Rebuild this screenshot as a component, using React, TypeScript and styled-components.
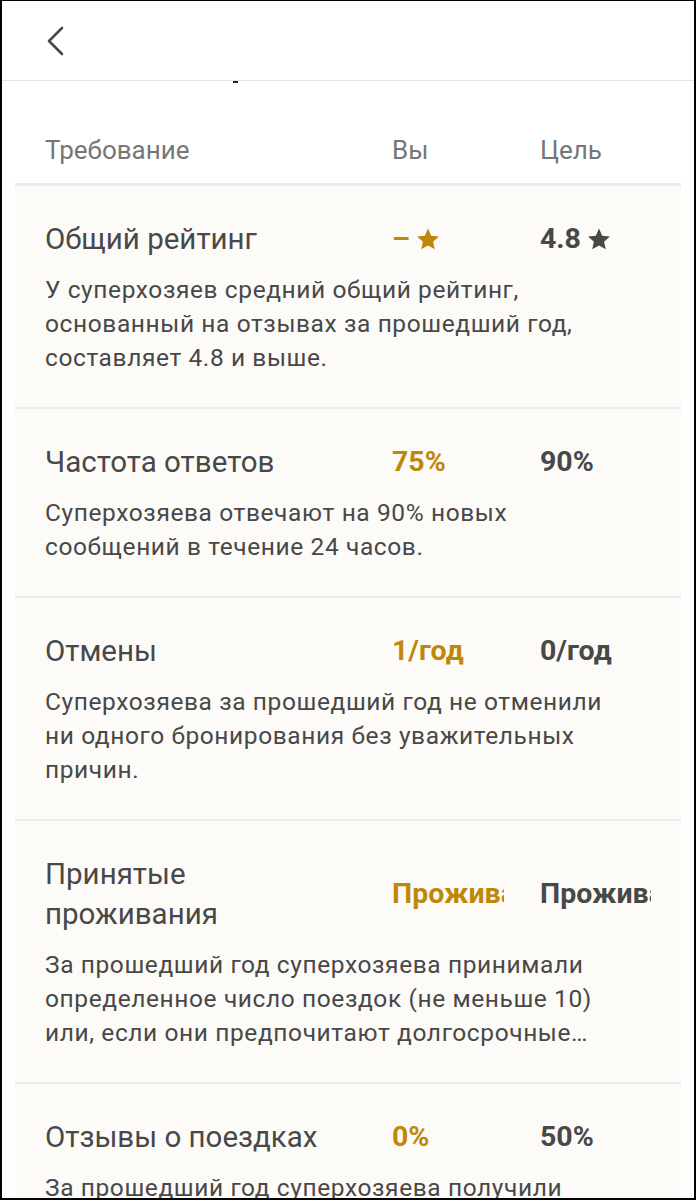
import React from "react";
import styled, {createGlobalStyle} from "styled-components";

const GlobalStyle = createGlobalStyle`
  html, body {
    margin: 0;
    padding: 0;
    background: #ffffff;
  }
  body {
    font-family: Roboto, "Noto Sans", "Liberation Sans", sans-serif;
    -webkit-font-smoothing: antialiased;
  }
`

const Screen = styled.div`
  box-sizing: border-box;
  width: 696px;
  height: 1200px;
  border: 2px solid #000;
  border-top-width: 1px;
  overflow: hidden;
  display: flex;
  flex-direction: column;
  background: #fff;
`

const TopBar = styled.header`
  flex: none;
  height: 79px;
  display: flex;
  align-items: center;
  padding-left: 40px;
  border-bottom: 1px solid #e4e4e4;
`

const BackButton = styled.button`
  border: 0;
  background: none;
  padding: 0;
  width: 28px;
  height: 32px;
  display: flex;
  align-items: center;
  justify-content: center;
  color: #484848;
  cursor: pointer;
`

const Scroller = styled.div`
  flex: 1;
  overflow: hidden;
  padding: 0 13px;
`

// bottom edge of the page title that has scrolled under the top bar
const TitleTail = styled.div`
  width: 5px;
  height: 2px;
  margin-left: 218px;
  background: #222;
`

const Grid = styled.div`
  display: grid;
  grid-template-columns: 1fr 148px 111px;
  padding: 0 30px;
`

const ColumnHead = styled(Grid)`
  padding-top: 52px;
  padding-bottom: 18px;
  border-bottom: 3px solid #ebebeb;
  font-size: 26px;
  line-height: 30px;
  color: #767676;
`

const Table = styled.div`
  background: #fdfbf8;
`

const Row = styled(Grid)<{$last?: boolean}>`
  padding-top: 33px;
  padding-bottom: 32px;
  border-bottom: ${p => (p.$last ? "0" : "2px solid #eeecea")};
  align-items: center;
`

const Title = styled.div`
  font-size: 29.5px;
  line-height: 40px;
  color: #484848;
  padding-right: 70px;
`

const Value = styled.div<{$tone: "own" | "goal"}>`
  font-size: 28.5px;
  font-weight: 700;
  line-height: 40px;
  color: ${p => (p.$tone === "own" ? "#bf870a" : "#484848")};
  white-space: nowrap;
  overflow: hidden;
  max-width: 112px;
  display: flex;
  align-items: center;
  gap: 6px;
`

const Desc = styled.div`
  grid-column: 1 / -1;
  margin-top: 14px;
  max-width: 572px;
  font-size: 24.5px;
  letter-spacing: 0.6px;
  line-height: 34px;
  color: #484848;
  display: -webkit-box;
  -webkit-line-clamp: 3;
  -webkit-box-orient: vertical;
  overflow: hidden;
`

const Star = () => (
  <svg width="24" height="24" viewBox="0 0 24 24" fill="currentColor" aria-hidden="true">
    <path d="M12 1.6l3.2 7.1 7.7.8-5.8 5.2 1.7 7.6L12 18.4l-6.8 3.9 1.7-7.6L1.1 9.5l7.7-.8z" />
  </svg>
)

type Requirement = {
  id: string;
  title: string;
  own: React.ReactNode;
  goal: React.ReactNode;
  text: string;
}

const REQUIREMENTS: Requirement[] = [
  {
    id: "rating",
    title: "Общий рейтинг",
    own: <>–<Star /></>,
    goal: <>4.8<Star /></>,
    text: "У суперхозяев средний общий рейтинг, основанный на отзывах за прошедший год, составляет 4.8 и выше.",
  },
  {
    id: "response",
    title: "Частота ответов",
    own: "75%",
    goal: "90%",
    text: "Суперхозяева отвечают на 90% новых сообщений в течение 24 часов.",
  },
  {
    id: "cancel",
    title: "Отмены",
    own: "1/год",
    goal: "0/год",
    text: "Суперхозяева за прошедший год не отменили ни одного бронирования без уважительных причин.",
  },
  {
    id: "stays",
    title: "Принятые проживания",
    own: "Проживания",
    goal: "Проживания",
    text: "За прошедший год суперхозяева принимали определенное число поездок (не меньше 10) или, если они предпочитают долгосрочные бронирования, не меньше 100 ночей в сумме.",
  },
  {
    id: "reviews",
    title: "Отзывы о поездках",
    own: "0%",
    goal: "50%",
    text: "За прошедший год суперхозяева получили отзывы не меньше чем о 50% поездок.",
  },
]

const App = () => {
  return (
    <>
      <GlobalStyle />
      <Screen>
        <TopBar>
          <BackButton aria-label="Назад">
            <svg width="20" height="30" viewBox="0 0 20 30" fill="none" stroke="currentColor" strokeWidth="2.6" strokeLinecap="round" strokeLinejoin="round">
              <path d="M16 2L3 15l13 13" />
            </svg>
          </BackButton>
        </TopBar>
        <Scroller>
          <TitleTail />
          <ColumnHead>
            <div>Требование</div>
            <div>Вы</div>
            <div>Цель</div>
          </ColumnHead>
          <Table>
            {REQUIREMENTS.map((req, i) => (
              <Row key={req.id} $last={i === REQUIREMENTS.length - 1}>
                <Title>{req.title}</Title>
                <Value $tone="own">{req.own}</Value>
                <Value $tone="goal">{req.goal}</Value>
                <Desc>{req.text}</Desc>
              </Row>
            ))}
          </Table>
        </Scroller>
      </Screen>
    </>
  )
}

export default App;
